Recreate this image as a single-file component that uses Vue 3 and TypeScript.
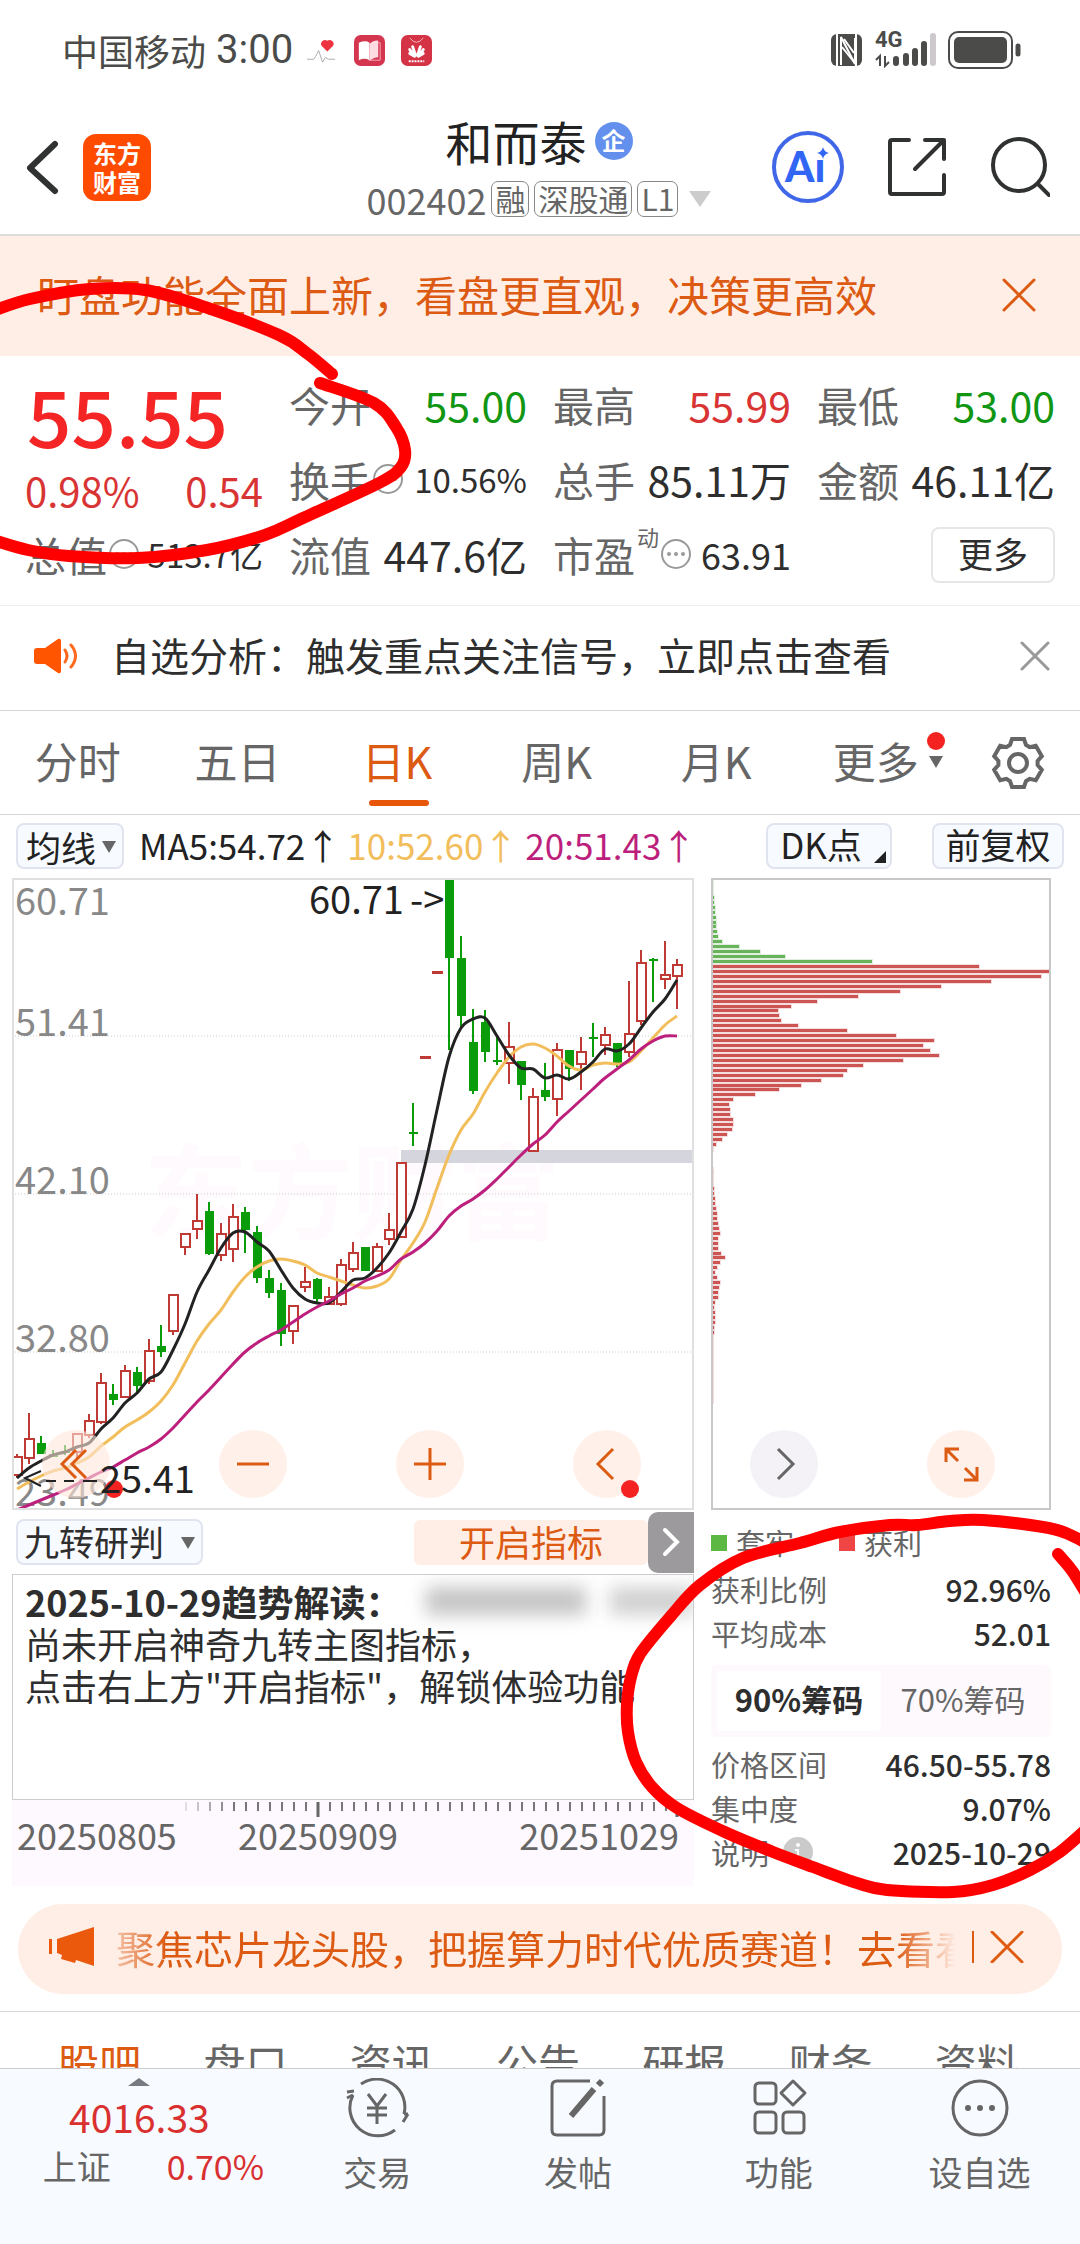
<script setup lang="ts">
import { ref } from 'vue'

type Point = [number, number]
/* up/down flag, then high, body top, body bottom, low in chart units */
type Candle = ['u' | 'd', number, number, number, number]

const STEP = 12
const FIRST_X = 5
const cx = (i: number): number => FIRST_X + i * STEP

const candles: Candle[] = [
  ['u', 576, 579, 597, 600], ['u', 535, 561, 580, 586], ['d', 558, 565, 576, 576], ['d', 572, 576, 579, 579],
  ['d', 567, 573, 575, 577], ['u', 555, 556, 574, 580], ['u', 536, 543, 557, 560], ['u', 495, 505, 544, 546],
  ['d', 506, 516, 522, 527], ['u', 487, 493, 519, 519], ['d', 489, 494, 508, 514], ['u', 461, 473, 503, 506],
  ['d', 447, 468, 474, 479], ['u', 416, 417, 453, 457], ['u', 355, 356, 369, 377], ['u', 316, 343, 351, 361],
  ['d', 324, 333, 376, 377], ['u', 345, 356, 377, 383], ['u', 326, 339, 371, 384], ['d', 329, 334, 352, 375],
  ['d', 348, 354, 400, 405], ['d', 392, 400, 415, 420], ['d', 405, 412, 456, 468], ['u', 427, 428, 453, 466],
  ['u', 389, 404, 409, 414], ['d', 400, 401, 421, 425], ['u', 409, 419, 426, 427], ['u', 381, 387, 426, 428],
  ['u', 364, 375, 391, 394], ['d', 369, 369, 393, 393], ['u', 365, 369, 393, 394], ['u', 335, 352, 361, 367],
  ['u', 284, 285, 359, 360], ['d', 225, 254, 256, 268], ['u', 179, 179, 179, 179], ['u', 94, 94, 94, 94],
  ['d', 0, 0, 80, 172], ['d', 58, 80, 138, 149], ['d', 131, 164, 213, 216], ['d', 132, 144, 174, 184],
  ['d', 159, 182, 184, 187], ['u', 144, 169, 185, 206], ['d', 183, 183, 207, 222], ['u', 210, 219, 273, 273],
  ['d', 185, 212, 219, 223], ['u', 165, 172, 221, 238], ['d', 172, 172, 191, 203], ['u', 159, 174, 186, 212],
  ['d', 145, 159, 161, 179], ['u', 149, 157, 167, 177], ['d', 165, 165, 185, 189], ['u', 103, 156, 174, 179],
  ['u', 72, 85, 143, 147], ['d', 80, 81, 83, 124], ['u', 63, 97, 101, 111], ['u', 81, 87, 98, 131],
]

const ma5 = [600, 590, 583, 577, 574, 569, 565, 551, 540, 525, 515, 501, 494, 472, 446, 414, 392, 370, 355, 354, 364, 373, 392, 410, 421, 425, 425, 414, 402, 400, 390, 375, 354, 331, 287, 232, 179, 150, 141, 140, 158, 177, 190, 191, 200, 197, 201, 194, 184, 171, 173, 166, 150, 134, 121, 102]
const ma10 = [611, 604, 598, 593, 590, 585, 579, 568, 559, 549, 542, 534, 523, 507, 485, 463, 446, 432, 414, 399, 389, 383, 381, 383, 387, 395, 399, 403, 407, 410, 408, 401, 382, 365, 344, 310, 277, 252, 236, 214, 195, 179, 169, 166, 170, 178, 188, 192, 187, 185, 186, 184, 173, 160, 147, 138]
const ma20 = [632, 627, 622, 617, 612, 606, 600, 594, 589, 582, 575, 569, 561, 550, 537, 524, 512, 499, 486, 474, 465, 458, 452, 444, 436, 429, 423, 416, 410, 403, 398, 392, 381, 374, 365, 353, 338, 328, 321, 312, 301, 289, 277, 266, 257, 244, 233, 222, 211, 200, 191, 182, 171, 163, 158, 158]

/* Catmull-Rom spline through the points, as cubic segments */
function smooth(pts: Point[]): string {
  let d = `M${pts[0][0]} ${pts[0][1]}`
  for (let i = 0; i < pts.length - 1; i++) {
    const p0 = pts[Math.max(0, i - 1)]
    const p1 = pts[i]
    const p2 = pts[i + 1]
    const p3 = pts[Math.min(pts.length - 1, i + 2)]
    const c = [
      p1[0] + (p2[0] - p0[0]) / 6, p1[1] + (p2[1] - p0[1]) / 6,
      p2[0] - (p3[0] - p1[0]) / 6, p2[1] - (p3[1] - p1[1]) / 6,
    ].map((n) => Math.round(n * 10) / 10)
    d += `C${c[0]} ${c[1]} ${c[2]} ${c[3]} ${p2[0]} ${p2[1]}`
  }
  return d
}

const averages = [
  { color: '#f2be5c', d: smooth(ma10.map((y, i): Point => [cx(i), y])) },
  { color: '#222222', d: smooth(ma5.map((y, i): Point => [cx(i), y])) },
  { color: '#bd1f7c', d: smooth(ma20.map((y, i): Point => [cx(i), y])) },
]

const priceLabels = [
  { text: '60.71', y: 37 },
  { text: '51.41', y: 158 },
  { text: '42.10', y: 316 },
  { text: '32.80', y: 474 },
  { text: '23.49', y: 628 },
]

/* chip distribution, top price to bottom */
const trapped = [1, 1, 1, 2, 2, 3, 3, 4, 4, 4, 5, 6, 10, 27, 48, 73, 160]
const profit = [267, 339, 329, 279, 229, 188, 146, 105, 79, 66, 67, 69, 86, 135, 184, 222, 211, 218, 227, 191, 151, 135, 131, 109, 89, 67, 43, 21, 17, 18, 18, 21, 21, 20, 15, 10, 4, 1,
  0, 0, 0, 1, 1, 1, 1, 2, 2, 3, 3, 4, 5, 5, 6, 7, 8, 6, 6, 6, 9, 13, 8, 5, 3, 5, 8, 7, 6, 6, 3, 2, 3, 3, 3, 2, 2, 1, 1, 1, 1, 1, 1, 1, 1, 1, 1, 1, 1, 1, 1]
const chips = [
  ...trapped.map((w) => ({ w, color: '#69b35b' })),
  ...profit.map((w) => ({ w, color: '#cc5654' })),
].map((b, i) => ({ ...b, y: Math.round(3 + i * 4.94) }))

const axisTicks = Array.from({ length: 42 }, (_, i) => 174 + i * 12)

const gear = Array.from({ length: 6 }, (_, k) => {
  const a = (k * Math.PI) / 3
  return ([[-8, -18], [-6, -24], [6, -24], [8, -18]] as Point[])
    .map(([x, y]) => `${(28 + x * Math.cos(a) - y * Math.sin(a)).toFixed(1)},${(28 + x * Math.sin(a) + y * Math.cos(a)).toFixed(1)}`)
    .join(' ')
}).join(' ')

interface Stat { label: string; value: string; tone?: string; size?: string; info?: boolean; sup?: string }
const stats: Stat[] = [
  { label: '今开', value: '55.00', tone: 'down' },
  { label: '最高', value: '55.99', tone: 'up' },
  { label: '最低', value: '53.00', tone: 'down' },
  { label: '换手', value: '10.56%', size: 'small', info: true },
  { label: '总手', value: '85.11万' },
  { label: '金额', value: '46.11亿' },
  { label: '总值', value: '513.7亿', size: 'small', info: true },
  { label: '流值', value: '447.6亿' },
  { label: '市盈', value: '63.91', size: 'medium', info: true, sup: '动' },
]

const periods = ['分时', '五日', '日K', '周K', '月K', '更多']
const period = ref('日K')
const chipRange = ref('90%筹码')
const costRows = [['获利比例', '92.96%'], ['平均成本', '52.01']]
const rangeRows = [['价格区间', '46.50-55.78'], ['集中度', '9.07%'], ['说明', '2025-10-29']]
const sections = ['股吧', '盘口', '资讯', '公告', '研报', '财务', '资料']

/* freehand marks */
const marks = [
  smooth([[-10, 312], [30, 299], [90, 289], [145, 290], [205, 307], [279, 335], [308, 354], [332, 374]]),
  smooth([[320, 383], [374, 403], [396, 427], [405, 450], [401, 467], [379, 483], [303, 518], [265, 535], [207, 550], [138, 558], [69, 556], [28, 550], [-10, 539]]),
  smooth([[1058, 1554], [1073, 1572], [1090, 1600]]),
  smooth([[1090, 1545], [1066, 1533], [1043, 1527], [983, 1520], [950, 1521], [917, 1525], [890, 1525], [840, 1532], [800, 1543], [743, 1558], [700, 1585], [670, 1617], [640, 1654], [631, 1677], [627, 1704], [628, 1732], [636, 1762], [652, 1787], [677, 1808], [727, 1833], [773, 1852], [813, 1867], [857, 1883], [887, 1890], [953, 1892], [993, 1885], [1030, 1870], [1060, 1852], [1090, 1826]]),
]
</script>

<template>
  <div class="page">
    <div class="status">
      <span class="carrier">中国移动</span>
      <span class="clock">3:00</span>
      <svg class="app" viewBox="0 0 32 32"><path d="M21 17l-6-6a4 4 0 0 1 6-5 4 4 0 0 1 6 5z" fill="#ee3340" /><path d="M0 25h7l2-3 3-6 4 12 3-5 3 2h7" fill="none" stroke="#aaa" /></svg>
      <svg class="app" viewBox="0 0 32 32"><rect width="32" height="32" rx="7" fill="#d43650" /><path d="M5 8q7-3 11 0v18q-5-3-11 0z" fill="#fff" /><path d="M16 9q5-4 9-3v17q-5 0-9 4z" fill="#ffdbe2" /><path d="M25 8h2v18h-10" fill="none" stroke="#f7a9b6" /></svg>
      <svg class="app" viewBox="0 0 32 32"><rect width="32" height="32" rx="7" fill="#d43245" /><path d="M9 3q7 9 14 0" fill="none" stroke="#f7bac0" /><g stroke="#fff" stroke-width="3" stroke-linecap="round"><path d="M14 22l-5-3M14 22L9 15M15 21l-3-9M18 22l5-3M18 22l5-7M17 21l3-9" /></g><path d="M8 27h16" stroke="#fff" stroke-width="2" stroke-dasharray="2 1" /></svg>
      <span class="grow"></span>
      <svg class="nfc" viewBox="0 0 32 34"><rect y="1" width="31" height="32" rx="6" fill="#4b4c4a" /><path d="M6 0v34M25 0v34" stroke="#fff" stroke-width="2" /><path d="M10 32V4l14 27V5" fill="none" stroke="#fff" stroke-width="2" /><path d="M11 14l12 15M13 6l10 14" stroke="#fff" stroke-width="2" /></svg>
      <span class="network">
        <b>4G</b>
        <svg class="signal" viewBox="0 0 62 36">
          <path d="M5 34V24l-4 4M10 24v10l4-4" fill="none" stroke="#4b4c4a" stroke-width="2" />
          <g stroke-width="6" stroke-linecap="round" stroke="#4b4c4a"><path d="M21 27v4M31 24v7M40 19v12M49 12v19" /><path d="M58 4v27" stroke="#ccc8cc" /></g>
        </svg>
      </span>
      <svg class="battery" viewBox="0 0 74 38"><rect x="1" y="1" width="63" height="36" rx="9" fill="none" stroke="#4b4c4a" stroke-width="2" /><rect x="6" y="6" width="53" height="26" rx="5" fill="#4b4c4a" /><path d="M70 15v8" stroke="#4b4c4a" stroke-width="5" stroke-linecap="round" /></svg>
    </div>

    <header class="header">
      <div class="header-left">
        <button class="plain" aria-label="返回"><svg width="34" height="56" viewBox="0 0 34 56"><path d="M29 5L4 29l25 23" fill="none" stroke="#303231" stroke-width="6" stroke-linecap="round" stroke-linejoin="round" /></svg></button>
        <a href="#" class="logo">东方<br />财富</a>
      </div>
      <div class="title">
        <h1>和而泰<span class="corp">企</span></h1>
        <button class="plain code">
          <span>002402</span><span class="tag">融</span><span class="tag">深股通</span><span class="tag">L1</span>
          <svg width="22" height="16" viewBox="0 0 22 16"><path d="M0 0h22L11 16z" fill="#ccc" /></svg>
        </button>
      </div>
      <div class="header-right">
        <button class="plain" aria-label="AI助手">
          <svg width="72" height="74" viewBox="0 0 72 74"><circle cx="36" cy="37" r="34" fill="none" stroke="#4067e8" stroke-width="4" /><text x="13" y="52" font-family="Lato, sans-serif" font-weight="900" font-size="42" fill="#3166f5">Aı</text><path d="M51 17q1 5 6 6-5 1-6 6-1-5-6-6 5-1 6-6z" fill="#3166f5" /></svg>
        </button>
        <button class="plain" aria-label="分享">
          <svg width="60" height="60" viewBox="0 0 60 60" fill="none" stroke="#303231" stroke-width="4" stroke-linecap="round" stroke-linejoin="round"><path d="M22 3H5q-2 0-2 2v50q0 2 2 2h50q2 0 2-2V38M38 3h19v19M57 3L28 32" /></svg>
        </button>
        <button class="plain" aria-label="搜索">
          <svg width="60" height="60" viewBox="0 0 60 60" fill="none" stroke="#303231" stroke-width="4" stroke-linecap="round"><circle cx="29" cy="28" r="26" /><path d="M48 47l11 11" /></svg>
        </button>
      </div>
    </header>

    <div class="banner">
      <a href="#">盯盘功能全面上新，看盘更直观，决策更高效</a>
      <button class="plain" aria-label="关闭"><svg width="34" height="34" viewBox="0 0 34 34"><path d="M2 2l30 30M32 2L2 32" stroke="#dc5a12" stroke-width="3" stroke-linecap="round" /></svg></button>
    </div>

    <section class="quote">
      <div class="price">
        <strong>55.55</strong>
        <p><span>0.98%</span><span>0.54</span></p>
      </div>
      <dl v-for="s in stats" :key="s.label" class="stat">
        <dt>{{ s.label }}<sup v-if="s.sup">{{ s.sup }}</sup>
          <svg v-if="s.info" width="30" height="30" viewBox="0 0 30 30"><circle cx="15" cy="15" r="14" fill="none" stroke="#999" stroke-width="2" /><g fill="#999"><circle cx="8" cy="15" r="2" /><circle cx="15" cy="15" r="2" /><circle cx="22" cy="15" r="2" /></g></svg>
        </dt>
        <dd :class="[s.tone, s.size]">{{ s.value }}</dd>
      </dl>
      <button class="more">更多</button>
    </section>

    <div class="notice">
      <svg width="46" height="36" viewBox="0 0 46 36"><path d="M3 10h8L24 1q3-1 3 2v30q0 3-3 2L11 26H3q-3 0-3-3V13q0-3 3-3z" fill="#ff5500" /><path d="M31 12q4 6 0 12M37 7q9 11 0 22" fill="none" stroke="#ff6a20" stroke-width="3" stroke-linecap="round" /></svg>
      <a href="#">自选分析：触发重点关注信号，立即点击查看</a>
      <button class="plain" aria-label="关闭"><svg width="30" height="30" viewBox="0 0 30 30"><path d="M2 2l26 26M28 2L2 28" stroke="#999" stroke-width="3" stroke-linecap="round" /></svg></button>
    </div>

    <nav class="periods">
      <button v-for="p in periods" :key="p" class="plain period" :class="{ active: period === p }" @click="period = p">
        <span>{{ p }}<i v-if="p === '更多'" class="arrow-dot"><svg width="16" height="30" viewBox="0 0 16 30"><path d="M1 18h14L8 30z" fill="#666" /></svg></i></span>
      </button>
      <button class="plain gear" aria-label="设置"><svg width="56" height="56" viewBox="0 0 56 56" fill="none" stroke="#666" stroke-width="4"><polygon :points="gear" /><circle cx="28" cy="28" r="9" /></svg></button>
    </nav>

    <div class="tools">
      <label class="pick pick-ma"><select aria-label="主图指标"><option>均线</option></select></label>
      <span>MA5:54.72↑</span>
      <span class="ma10">10:52.60↑</span>
      <span class="ma20">20:51.43↑</span>
      <span class="grow"></span>
      <button class="chip dk">DK点</button>
      <button class="chip">前复权</button>
    </div>

    <section class="charts">
      <svg viewBox="0 0 682 632" class="plot" role="img" aria-label="日K线图">
        <text x="132" y="354" font-size="104" font-weight="700" fill="#fefafd">东方财富</text>
        <path d="M0 158h682M0 316h682M0 474h682" stroke="#ccc" stroke-dasharray="1 2" />
        <rect x="389" y="272" width="292" height="13" fill="#d4d5dd" />
        <text v-for="l in priceLabels" :key="l.text" x="3" :y="l.y" class="axis-price">{{ l.text }}</text>
        <g v-for="(c, i) in candles" :key="i" :class="c[0]">
          <path :d="`M${cx(i)} ${c[1]}V${c[4]}`" />
          <rect :x="cx(i) - 4" :y="c[2]" width="9" :height="Math.max(1, c[3] - c[2])" />
        </g>
        <path v-for="a in averages" :key="a.color" :d="a.d" fill="none" :stroke="a.color" stroke-width="3" />
        <rect x="1" y="1" width="680" height="630" fill="none" stroke="#e0e0e0" stroke-width="2" />
      </svg>
      <svg viewBox="0 0 340 632" class="plot" role="img" aria-label="筹码分布">
        <rect v-for="(b, i) in chips" :key="i" x="1" :y="b.y" :width="b.w" height="3" :fill="b.color" :stroke="b.color" stroke-width="2" stroke-opacity="0.2" />
        <path d="M1 1h338v630H1z" fill="none" stroke="#c8c8c8" stroke-width="2" />
      </svg>
      <div class="pads">
        <button class="pad dot-out" aria-label="更早"><svg viewBox="0 0 68 68"><path d="M34 20L20 34l14 14M44 20L30 34l14 14" /></svg></button>
        <button class="pad" aria-label="缩小"><svg viewBox="0 0 68 68"><path d="M18 34h32" /></svg></button>
        <button class="pad" aria-label="放大"><svg viewBox="0 0 68 68"><path d="M18 34h32M34 18v32" /></svg></button>
        <button class="pad dot-in" aria-label="左移"><svg viewBox="0 0 68 68"><path d="M40 19L25 34l15 15" /></svg></button>
        <button class="pad grey" aria-label="右移"><svg viewBox="0 0 68 68"><path d="M28 19l15 15-15 15" /></svg></button>
        <button class="pad" aria-label="全屏"><svg viewBox="0 0 68 68"><path d="M19 32V19h13M19 19l12 12M50 37v13H37M50 50L38 38" /></svg></button>
      </div>
      <svg viewBox="0 0 1039 632" class="extremes">
        <text x="297" y="36">60.71<tspan x="398">-&gt;</tspan></text>
        <path d="M29 593l-16 7 16 8M34 603h10M52 603h10M71 603h14" fill="none" stroke="#222" stroke-width="2" />
        <text x="88" y="615">25.41</text>
      </svg>
    </section>

    <section class="details">
      <div class="study">
        <div class="study-bar">
          <label class="pick pick-study"><select aria-label="副图指标"><option>九转研判</option></select></label>
          <span class="grow"></span>
          <button class="enable">开启指标</button>
          <button class="fold" aria-label="展开"><svg width="18" height="30" viewBox="0 0 18 30"><path d="M3 3l12 12L3 27" fill="none" stroke="#fff" stroke-width="4" stroke-linecap="round" /></svg></button>
        </div>
        <div class="reading">
          <p class="lead"><b>2025-10-29趋势解读：</b><i class="veil"></i><i class="veil rest"></i></p>
          <p>尚未开启神奇九转主图指标，</p>
          <p>点击右上方"开启指标"，解锁体验功能</p>
        </div>
        <svg viewBox="0 0 682 86" class="plot" role="img" aria-label="时间轴">
          <rect width="682" height="86" fill="#fdf9fe" />
          <path v-for="(x, i) in axisTicks" :key="x" :d="`M${x} 2v9`" stroke="#777" stroke-width="2" :opacity="Math.min(1, 0.2 + i * 0.2)" />
          <path d="M306 2v15M665 2v15" stroke="#666" stroke-width="3" />
          <text x="5" y="50">20250805</text>
          <text x="306" y="50" text-anchor="middle">20250909</text>
          <text x="667" y="50" text-anchor="end">20251029</text>
        </svg>
      </div>
      <div class="cost">
        <ul class="legend"><li class="g">套牢</li><li class="r">获利</li></ul>
        <dl v-for="r in costRows" :key="r[0]"><dt>{{ r[0] }}</dt><dd>{{ r[1] }}</dd></dl>
        <div class="switch">
          <button v-for="c in ['90%筹码', '70%筹码']" :key="c" class="plain" :class="{ on: chipRange === c }" @click="chipRange = c">{{ c }}</button>
        </div>
        <dl v-for="r in rangeRows" :key="r[0]">
          <dt>{{ r[0] }}<svg v-if="r[0] === '说明'" width="30" height="30" viewBox="0 0 30 30"><circle cx="15" cy="15" r="15" fill="#cacaca" /><circle cx="15" cy="8" r="2" fill="#fff" /><path d="M12 13h3v9M11 22h8" fill="none" stroke="#fff" stroke-width="2" /></svg></dt>
          <dd>{{ r[1] }}</dd>
        </dl>
      </div>
    </section>

    <div class="promo">
      <svg width="48" height="40" viewBox="0 0 48 40" fill="#eb5a0c"><path d="M1 12h3v15H1zM9 12L46 0v39l-18-6-1 3-14-4 1-4-5-2z" /></svg>
      <a href="#">聚焦芯片龙头股，把握算力时代优质赛道！去看看</a>
      <button class="plain" aria-label="关闭"><svg width="34" height="32" viewBox="0 0 34 32"><path d="M2 1l30 30M32 1L2 31" stroke="#e05a12" stroke-width="3" stroke-linecap="round" /></svg></button>
    </div>

    <nav class="sections">
      <a v-for="(s, i) in sections" :key="s" href="#" :class="{ active: i === 0 }">{{ s }}</a>
    </nav>

    <footer class="dock">
      <a href="#" class="index">
        <svg width="22" height="8" viewBox="0 0 22 8"><path d="M0 8L11 0l11 8z" fill="#777a80" /></svg>
        <strong>4016.33</strong>
        <span><em>上证</em>0.70%</span>
      </a>
      <a href="#">
        <svg viewBox="0 0 66 60"><path d="M17 6A28 28 0 0 1 60 36M9 17A28 28 0 0 0 51 52" /><path d="M9 17l-6 3M60 36l4 0M59 44l5-8M3 14l7 -1" /><path d="M24 16l9 12 9-12M33 28v18M23 30h20M23 37h20" /></svg>
        交易
      </a>
      <a href="#">
        <svg viewBox="0 0 66 60"><path d="M45 3H12q-5 0-5 5v44q0 5 5 5h42q5 0 5-5V18" /><path d="M26 38l23-27M53 7l4-4" stroke-width="6" /></svg>
        发帖
      </a>
      <a href="#">
        <svg viewBox="0 0 66 60"><rect x="9" y="5" width="21" height="21" rx="4" /><rect x="9" y="34" width="21" height="21" rx="4" /><rect x="37" y="34" width="21" height="21" rx="4" /><path d="M47 3l12 12-12 12-12-12z" stroke-linejoin="round" /></svg>
        功能
      </a>
      <a href="#">
        <svg viewBox="0 0 66 60"><circle cx="33" cy="30" r="27" /><g fill="#666" stroke="none"><circle cx="21" cy="30" r="3" /><circle cx="33" cy="30" r="3" /><circle cx="45" cy="30" r="3" /></g></svg>
        设自选
      </a>
    </footer>

    <svg class="marks" viewBox="0 0 1080 2244" aria-hidden="true"><path v-for="m in marks" :key="m" :d="m" /></svg>
  </div>
</template>

<style>
body {
  margin: 0;
  background: #fff;
}
</style>

<style scoped>
* { box-sizing: border-box; }
.page {
  position: relative;
  overflow: hidden;
  font-family: "Noto Sans CJK SC", "Noto Sans", sans-serif;
  color: #2e2e2e;
}
button, select { font: inherit; color: inherit; }
a { color: inherit; text-decoration: none; }
h1, p, dl, dd, ul { margin: 0; padding: 0; }
svg { display: block; flex: none; }
.plain { border: 0; background: none; padding: 0; }
.grow { flex: 1; }

.status {
  display: flex;
  align-items: center;
  height: 100px;
  padding: 0 58px 0 62px;
  color: #4b4c4a;
  font-size: 36px;
  line-height: 44px;
}
.clock { margin: 0 14px 0 10px; font-size: 40px; font-family: Roboto, sans-serif; }
.app { width: 31px; height: 31px; margin-right: 16px; }
.nfc { width: 32px; height: 34px; margin-right: 12px; }
.network { position: relative; margin-right: 11px; }
.network b { position: absolute; left: 0; top: -4px; font: 700 22px/24px Roboto, sans-serif; }
.signal { width: 62px; height: 36px; }
.battery { width: 74px; height: 38px; }

.header {
  display: grid;
  grid-template-columns: 1fr auto 1fr;
  align-items: center;
  height: 136px;
  padding: 0 28px 0 26px;
  border-bottom: 2px solid #dcdcdc;
}
.header-left { display: flex; align-items: center; gap: 23px; }
.header-right { display: flex; align-items: center; justify-content: flex-end; gap: 43px; padding-right: 2px; }
.logo {
  padding: 4px 10px 5px;
  border-radius: 13px;
  background: #ff4b00;
  color: #fff;
  font-size: 24px;
  font-weight: 700;
  line-height: 29px;
}
.title { padding-top: 2px; text-align: center; }
h1 {
  display: flex;
  align-items: center;
  justify-content: center;
  gap: 8px;
  font-size: 47px;
  font-weight: 400;
  line-height: 62px;
  color: #222;
}
.corp {
  width: 38px;
  height: 38px;
  border-radius: 50%;
  background: #6390ec;
  color: #fff;
  font-size: 24px;
  font-weight: 700;
  line-height: 36px;
}
.code { display: flex; align-items: center; gap: 5px; height: 54px; font-size: 36px; line-height: 36px; color: #666; }
.code svg { margin-left: 6px; }
.tag { height: 36px; padding: 0 3px; border: 1px solid #888; border-radius: 7px; font-size: 30px; line-height: 32px; }

.banner {
  display: flex;
  align-items: center;
  justify-content: space-between;
  height: 120px;
  padding: 0 44px 2px 37px;
  background: #ffeee6;
  color: #dc5a12;
  font-size: 42px;
}
.banner a { padding-bottom: 4px; }

.quote {
  display: grid;
  grid-template-columns: repeat(4, 1fr);
  grid-auto-rows: 75px;
  column-gap: 26px;
  padding: 10px 25px 14px;
  border-bottom: 1px solid #ececec;
}
.price { grid-row: span 2; color: #d93434; }
.price strong { display: block; padding-left: 2px; font-size: 78px; font-weight: 500; line-height: 96px; color: #f52525; }
.price p { display: flex; justify-content: space-between; font-size: 40px; line-height: 56px; }
.stat { display: flex; align-items: center; justify-content: space-between; white-space: nowrap; }
.stat dt { display: flex; align-items: center; font-size: 41px; color: #666; }
.stat dt svg { margin-left: 2px; }
.stat sup { align-self: flex-start; margin-left: 2px; font-size: 22px; line-height: 24px; }
.stat dd { font-size: 41px; }
.stat dd.small { font-size: 33px; }
.stat dd.medium { font-size: 36px; }
.stat dd.up { color: #d93434; }
.stat dd.down { color: #119614; }
.more {
  width: 124px;
  height: 56px;
  margin-top: 11px;
  padding: 0 0 4px;
  justify-self: end;
  border: 2px solid #e6e6e6;
  border-radius: 8px;
  background: #fff;
  font-size: 35px;
  line-height: 48px;
}

.notice {
  display: flex;
  align-items: center;
  height: 105px;
  padding: 0 30px 4px 34px;
  border-bottom: 1px solid #d6d6d6;
  font-size: 39px;
}
.notice a { flex: 1; margin-left: 31px; padding-bottom: 4px; }

.periods { display: flex; height: 104px; border-bottom: 1px solid #d6d6d6; color: #666; }
.period { flex: 159; position: relative; padding: 0 4px 6px 0; font-size: 43px; }
.period.active { color: #dc5a12; }
.period.active::after {
  content: "";
  position: absolute;
  bottom: 8px;
  left: calc(50% - 30px);
  width: 60px;
  height: 6px;
  border-radius: 3px;
  background: #e8560a;
}
.period > span { position: relative; }
.arrow-dot { position: absolute; left: 95px; top: 9px; }
.arrow-dot::before {
  content: "";
  position: absolute;
  left: -1px;
  top: 0;
  width: 18px;
  height: 18px;
  margin-top: -6px;
  border-radius: 50%;
  background: #f52222;
}
.gear { flex: 123; display: flex; align-items: center; justify-content: center; padding-right: 2px; }

.tools { display: flex; align-items: center; height: 63px; padding: 0 16px 2px; font-size: 35px; line-height: 44px; color: #222; }
.tools > span { margin-right: 7px; padding-bottom: 2px; }
.tools > .grow { margin: 0; }
.ma10 { color: #f2be5c; }
.ma20 { color: #bd1f7c; }
.pick, .chip { position: relative; height: 46px; border: 2px solid #e0e4ee; border-radius: 8px; background: #f7faff; }
.pick select { appearance: none; width: 100%; height: 42px; padding: 0 0 3px; border: 0; background: none; font-size: 35px; line-height: 39px; }
.pick::after {
  content: "";
  position: absolute;
  right: 6px;
  top: 16px;
  border: 7px solid transparent;
  border-top: 12px solid #666;
  border-bottom: 0;
}
.pick-ma { width: 108px; margin-right: 15px; padding-left: 8px; }
.pick-study { width: 187px; padding-left: 6px; }
.chip { width: 132px; padding: 0 0 3px; font-size: 35px; line-height: 38px; }
.chip.dk { width: 126px; margin-right: 40px; padding-right: 16px; }
.chip.dk::after {
  content: "";
  position: absolute;
  right: 4px;
  bottom: 4px;
  border-left: 12px solid transparent;
  border-bottom: 12px solid #222;
}

.charts, .details {
  display: grid;
  grid-template-columns: minmax(0, 682fr) minmax(0, 340fr);
  column-gap: 17px;
  margin: 0 29px 0 12px;
}
.charts { position: relative; }
.plot { width: 100%; height: auto; font-size: 36px; fill: #666; }
.axis-price { font-size: 38px; fill: #888; }
.extremes { position: absolute; inset: 0; width: 100%; height: auto; font-size: 38px; fill: #222; pointer-events: none; }
.u path, .u rect { stroke: #bf3a35; fill: #fff; stroke-width: 2; }
.d path { stroke: #0a9c0a; stroke-width: 2; }
.d rect { fill: #0a9c0a; }
.pads { position: absolute; left: 30px; right: 56px; bottom: 12px; display: flex; justify-content: space-between; }
.pad { position: relative; width: 68px; height: 68px; padding: 0; border: 0; border-radius: 50%; background: rgba(255, 232, 220, 0.6); }
.pad svg { width: 68px; height: 68px; fill: none; stroke: #dc5a12; stroke-width: 3; }
.pad.grey { background: #f5f2f7; }
.pad.grey svg { stroke: #666; }
.dot-out::after, .dot-in::after {
  content: "";
  position: absolute;
  right: -13px;
  bottom: 0;
  width: 18px;
  height: 18px;
  border-radius: 50%;
  background: #f52222;
}
.dot-in::after { right: 2px; }

.study-bar { display: flex; align-items: center; height: 64px; padding-left: 4px; }
.enable { width: 234px; height: 45px; padding: 0 0 3px; border: 0; border-radius: 6px; background: #ffeee6; color: #dc5a12; font-size: 36px; line-height: 42px; }
.fold { display: flex; align-items: center; justify-content: center; width: 46px; height: 61px; padding: 0; border: 0; border-radius: 10px 0 0 10px; background: #9c9a9d; }
.reading { height: 226px; padding: 5px 12px; border: 1px solid #ccc; font-size: 36px; line-height: 42px; white-space: nowrap; overflow: hidden; }
.lead { display: flex; align-items: center; }
.veil { width: 160px; height: 28px; margin-left: 24px; background: #c4c4c4; filter: blur(9px); }
.veil.rest { flex: 1; margin-right: -12px; background: #d0d0d0; }

.cost { font-size: 29px; line-height: 44px; color: #666; white-space: nowrap; }
.legend { display: flex; gap: 45px; height: 57px; padding-top: 7px; list-style: none; }
.legend li { display: flex; align-items: center; gap: 9px; }
.legend li::before { content: ""; width: 16px; height: 16px; margin-top: 2px; background: #5ab843; }
.legend .r::before { background: #f04545; }
.cost dl { display: flex; justify-content: space-between; height: 44px; }
.cost dt { display: flex; align-items: center; }
.cost dt svg { margin-left: 14px; }
.cost dd { font-size: 30px; font-weight: 500; color: #2e2e2e; }
.switch { display: flex; height: 72px; margin: 10px 0 5px; padding: 6px; border-radius: 6px; background: #fdf9fd; }
.switch button { flex: 1; padding: 0 0 4px; font-size: 31px; line-height: 44px; }
.switch .on { border-radius: 4px; background: #fff; color: #2e2e2e; font-weight: 700; }

.promo {
  display: flex;
  align-items: center;
  height: 90px;
  margin: 18px 18px 17px;
  padding: 0 38px 4px 30px;
  border-radius: 45px;
  background: #ffeee6;
  color: #dc5a12;
  font-size: 39px;
}
.promo a {
  flex: 1;
  min-width: 0;
  margin: 0 16px 0 20px;
  overflow: hidden;
  white-space: nowrap;
  mask-image: linear-gradient(90deg, rgba(0, 0, 0, 0.3), #000 50px, #000 calc(100% - 60px), transparent);
}
.promo button { padding-left: 16px; border-left: 2px solid #dc5a12; }

.sections { display: flex; height: 57px; padding: 0 30px 0 26px; overflow: hidden; border-top: 1px solid #d6d6d6; font-size: 42px; line-height: 100px; color: #666; }
.sections a { flex: 1; text-align: center; }
.sections .active { color: #dc5a12; }

.dock { display: flex; height: 176px; border-top: 1px solid #ccc; background: #f7faff; color: #666; font-size: 34px; line-height: 48px; }
.dock a { flex: 201; display: flex; flex-direction: column; align-items: center; gap: 10px; padding-top: 9px; }
.dock a > svg { width: 66px; height: 60px; fill: none; stroke: #666; stroke-width: 3; }
.dock .index { flex: 275; gap: 7px; padding-left: 2px; color: #d93030; }
.dock .index svg { width: 22px; height: 8px; stroke: none; }
.index strong { font-size: 39px; font-weight: 400; line-height: 46px; }
.index span { display: flex; gap: 56px; padding-left: 28px; line-height: 40px; }
.index em { font-style: normal; color: #666; }

.marks { position: absolute; inset: 0 0 auto; width: 100%; height: auto; pointer-events: none; fill: none; stroke: #f00; stroke-width: 12; stroke-linecap: round; }
</style>
